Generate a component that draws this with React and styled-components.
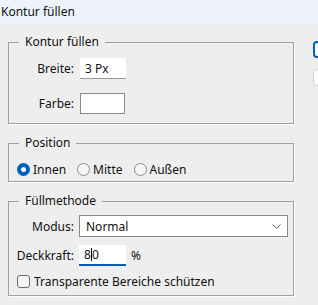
import React from "react";
import styled, { createGlobalStyle } from "styled-components";

const Global = createGlobalStyle`
  html, body { margin: 0; padding: 0; background: #eeeeee; }
  body { font-family: "Noto Sans", "Open Sans", sans-serif; font-size: 12px; color: #111; overflow: hidden; }
  * { box-sizing: border-box; }
`;

const Window = styled.div`
  width: 318px;
  height: 305px;
  display: flex;
  flex-direction: column;
  overflow: hidden;
`;

const TitleBar = styled.div`
  height: 24px;
  background: #eef3f9;
  padding-left: 1px;
  line-height: 24px;
  color: #111;
`;

const Body = styled.div`
  display: flex;
  gap: 19px;
  padding: 18px 0 0 8px;
`;

const Column = styled.div`
  width: 286px;
  display: flex;
  flex-direction: column;
  gap: 19px;
  flex-shrink: 0;
`;

const Group = styled.div`
  position: relative;
  border: 1px solid #a0a0a0;
  box-shadow: 1px 1px 0 #ffffff;
  padding: ${(p) => p.$pad};
`;

const Legend = styled.div`
  position: absolute;
  top: -9px;
  left: 10px;
  padding: 0 6px;
  background: #eeeeee;
  line-height: 16px;
`;

const Form = styled.div`
  display: grid;
  grid-template-columns: 65px auto;
  column-gap: ${(p) => p.$gap || 6}px;
  row-gap: ${(p) => p.$row}px;
  align-items: center;
`;

const Label = styled.span`
  text-align: right;
`;

const Field = styled.div`
  display: flex;
  align-items: center;
  gap: 5px;
`;

const TextBox = styled.div`
  width: ${(p) => p.$w}px;
  height: ${(p) => p.$h}px;
  background: #fff;
  border: ${(p) => (p.$outlined ? "1px solid #8a8a8a" : "none")};
  border-bottom: ${(p) =>
    p.$focused ? "2px solid #005fb8" : p.$outlined ? "1px solid #8a8a8a" : "1px solid #9a9a9a"};
  padding-left: 5px;
  display: flex;
  align-items: center;
`;

const Caret = styled.span`
  display: inline-block;
  width: 1px;
  height: 13px;
  background: #000;
`;

const Select = styled.div`
  width: 209px;
  height: 22px;
  background: #fff;
  border: 1px solid #8a8a8a;
  padding: 0 6px;
  display: flex;
  align-items: center;
  justify-content: space-between;
`;

const RadioRow = styled.div`
  display: flex;
  align-items: center;
  gap: 11px;
  height: 16px;
`;

const Option = styled.label`
  display: flex;
  align-items: center;
  gap: 3px;
`;

const RadioDot = styled.span`
  width: 13px;
  height: 13px;
  border-radius: 50%;
  flex-shrink: 0;
  background: ${(p) => (p.$on ? "#005fb8" : "#f5f5f5")};
  border: ${(p) => (p.$on ? "none" : "1px solid #8a8a8a")};
  display: flex;
  align-items: center;
  justify-content: center;
  &::after {
    content: "";
    display: ${(p) => (p.$on ? "block" : "none")};
    width: 5px;
    height: 5px;
    border-radius: 50%;
    background: #fff;
  }
`;

const CheckRow = styled.label`
  display: flex;
  align-items: center;
  gap: 4px;
  height: 16px;
  margin-top: 7px;
  padding-left: 8px;
`;

const CheckBox = styled.span`
  width: 13px;
  height: 13px;
  border: 1px solid #6e6e6e;
  border-radius: 3px;
  background: #f5f5f5;
  flex-shrink: 0;
`;

const Buttons = styled.div`
  display: flex;
  flex-direction: column;
  gap: 11px;
  margin-top: -1px;
`;

const Button = styled.div`
  width: 75px;
  height: 17px;
  border-radius: 4px;
  background: #fdfdfd;
  border: ${(p) => (p.$primary ? "2px solid #005fb8" : "1px solid #d0d0d0")};
  flex-shrink: 0;
`;

export default function App() {
  return (
    <Window>
      <Global />
      <TitleBar>Kontur füllen</TitleBar>
      <Body>
        <Column>
          <Group $pad="15px 0 9px 0">
            <Legend>Kontur füllen</Legend>
            <Form $row={14}>
              <Label>Breite:</Label>
              <TextBox $w={46} $h={21}>3 Px</TextBox>
              <Label>Farbe:</Label>
              <TextBox $w={45} $h={21} $outlined />
            </Form>
          </Group>
          <Group $pad="17px 0 4px 8px">
            <Legend>Position</Legend>
            <RadioRow>
              <Option><RadioDot $on />Innen</Option>
              <Option><RadioDot />Mitte</Option>
              <Option><RadioDot />Außen</Option>
            </RadioRow>
          </Group>
          <Group $pad="13px 0 6px 0">
            <Legend>Füllmethode</Legend>
            <Form $row={8} $gap={5}>
              <Label>Modus:</Label>
              <Select>
                <span>Normal</span>
                <svg width="9" height="5" viewBox="0 0 9 5">
                  <path d="M0.5 0.5 L4.5 4.5 L8.5 0.5" fill="none" stroke="#606060" strokeWidth="1" />
                </svg>
              </Select>
              <Label>Deckkraft:</Label>
              <Field>
                <TextBox $w={47} $h={21} $focused>
                  8<Caret />0
                </TextBox>
                <span>%</span>
              </Field>
            </Form>
            <CheckRow>
              <CheckBox />
              Transparente Bereiche schützen
            </CheckRow>
          </Group>
        </Column>
        <Buttons>
          <Button $primary />
          <Button />
        </Buttons>
      </Body>
    </Window>
  );
}
